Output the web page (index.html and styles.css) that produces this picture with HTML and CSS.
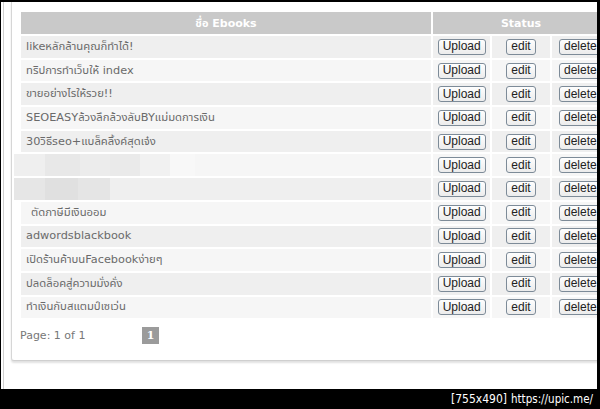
FILE: index.html
```html
<!DOCTYPE html>
<html>
<head>
<meta charset="utf-8">
<link rel="stylesheet" href="styles.css">
</head>
<body>
<div class="screen">
  <div class="page">
    <div class="rule">
      <div class="card">
        <table class="grid">
          <thead>
            <tr><th class="name-h">ชื่อ Ebooks</th><th colspan="3">Status</th></tr>
          </thead>
          <tbody>
            <tr class="odd"><td class="name">likeหลักล้านคุณก็ทำได้!</td><td><button>Upload</button></td><td><button>edit</button></td><td><button>delete</button></td></tr>
            <tr class="even"><td class="name">ทริปการทำเว็บให้ index</td><td><button>Upload</button></td><td><button>edit</button></td><td><button>delete</button></td></tr>
            <tr class="odd"><td class="name">ขายอย่างไรให้รวย!!</td><td><button>Upload</button></td><td><button>edit</button></td><td><button>delete</button></td></tr>
            <tr class="even"><td class="name">SEOEASYล้วงลึกล้วงลับBYแม่มดการเงิน</td><td><button>Upload</button></td><td><button>edit</button></td><td><button>delete</button></td></tr>
            <tr class="odd"><td class="name">30วิธีseo+แบล็คลิ้งค์สุดเจ๋ง</td><td><button>Upload</button></td><td><button>edit</button></td><td><button>delete</button></td></tr>
            <tr class="even"><td class="name blur"><span class="mosaic m1"><i class="b1"></i><i class="b2"></i><i class="b3"></i><i class="b4"></i><i class="b5"></i><i class="b6"></i></span></td><td><button>Upload</button></td><td><button>edit</button></td><td><button>delete</button></td></tr>
            <tr class="odd"><td class="name blur"><span class="mosaic m2"><i class="c1"></i><i class="c2"></i><i class="c3"></i></span></td><td><button>Upload</button></td><td><button>edit</button></td><td><button>delete</button></td></tr>
            <tr class="even"><td class="name indent">ตัดภาษีมีเงินออม</td><td><button>Upload</button></td><td><button>edit</button></td><td><button>delete</button></td></tr>
            <tr class="odd"><td class="name">adwordsblackbook</td><td><button>Upload</button></td><td><button>edit</button></td><td><button>delete</button></td></tr>
            <tr class="even"><td class="name">เปิดร้านค้าบนFacebookง่ายๆ</td><td><button>Upload</button></td><td><button>edit</button></td><td><button>delete</button></td></tr>
            <tr class="odd"><td class="name">ปลดล็อคสู่ความมั่งคั่ง</td><td><button>Upload</button></td><td><button>edit</button></td><td><button>delete</button></td></tr>
            <tr class="even"><td class="name">ทำเงินกับสแตมป์เซเว่น</td><td><button>Upload</button></td><td><button>edit</button></td><td><button>delete</button></td></tr>
          </tbody>
        </table>
        <div class="pager">
          <span class="info">Page: 1 of 1</span>
          <span class="num">1</span>
        </div>
      </div>
    </div>
  </div>
  <div class="bar"><span class="dim">[755x490]</span><span class="url">https://upic.me/</span></div>
</div>
</body>
</html>
```
FILE: styles.css
```css
html, body {
  margin: 0;
  padding: 0;
  background: #000;
}
.screen {
  width: 600px;
  height: 409px;
  padding: 2px 3px 0 1px;
  box-sizing: border-box;
  display: flex;
  flex-direction: column;
  overflow: hidden;
}
.page {
  height: 387px;
  background: #fff;
  padding-left: 2px;
  overflow: hidden;
  flex: none;
}
.rule {
  height: 100%;
  border-left: 1px solid #d0d0d0;
  padding-left: 7px;
}
.card {
  width: 640px;
  border-left: 1px solid #d6d6d6;
  border-bottom: 1px solid #cfcfcf;
  box-shadow: 0 2px 2px rgba(0,0,0,0.12);
  border-radius: 0 0 0 3px;
  padding: 8px 0 16px 7px;
  background: #fff;
}
.grid {
  border-collapse: separate;
  border-spacing: 2px;
  font-family: Tahoma, "DejaVu Sans", "Noto Sans Thai", "Noto Sans", sans-serif;
  font-size: 11px;
  table-layout: fixed;
  width: 592px;
}
.grid th {
  height: 22px;
  padding: 0;
  background: #c9c9c9;
  color: #fff;
  font-weight: bold;
  font-size: 11px;
  text-align: center;
}
.grid th.name-h { width: 410px; }
.grid td {
  height: 21.7px;
  padding: 0;
  text-align: center;
  vertical-align: middle;
  width: 58px;
  line-height: 14px;
}
.grid td.name {
  text-align: left;
  padding-left: 5px;
  color: #6a6a6a;
  white-space: nowrap;
  overflow: visible;
  font-size: 11.3px;
}
.grid td.indent { padding-left: 10px; }
.odd td { background: #efefef; }
.even td { background: #f6f6f6; }
.grid td.blur { position: relative; }
.mosaic {
  position: absolute;
  top: 0;
  left: -7px;
  display: flex;
  height: 100%;
}
.mosaic i { display: block; height: 100%; }
.m1 .b1 { width: 31px; background: #efefef; }
.m1 .b2 { width: 35px; background: #e8e8e8; }
.m1 .b3 { width: 30px; background: #ececec; }
.m1 .b4 { width: 30px; background: #eaeaea; }
.m1 .b5 { width: 30px; background: #f1f1f1; }
.m1 .b6 { width: 25px; background: #f8f8f8; }
.m2 .c1 { width: 31px; background: #e6e6e6; }
.m2 .c2 { width: 33px; background: #e0e0e0; }
.m2 .c3 { width: 32px; background: #e5e5e5; }
button {
  font-family: "Liberation Sans", Arial, sans-serif;
  font-size: 12px;
  color: #222;
  height: 16px;
  padding: 0 4px;
  margin: 0;
  line-height: 13px;
  border: 1px solid #7d8b98;
  border-radius: 3px;
  background: linear-gradient(#fefefe, #ececec);
  vertical-align: middle;
}
.pager {
  display: flex;
  align-items: center;
  padding: 7px 0 0 1px;
  font-family: Verdana, "DejaVu Sans", sans-serif;
  font-size: 11px;
  color: #777;
}
.info { width: 122px; }
.num {
  width: 17px;
  height: 17px;
  line-height: 17px;
  background: #9b9b9b;
  color: #fff;
  text-align: center;
  font-weight: bold;
  font-family: Tahoma, "DejaVu Serif", serif;
}
.bar {
  height: 20px;
  display: flex;
  align-items: center;
  justify-content: flex-end;
  gap: 4px;
  padding-right: 4px;
  color: #fff;
  font-family: "DejaVu Sans Condensed", "DejaVu Sans", sans-serif;
  font-size: 12px;
  white-space: pre;
}
.url { font-family: "DejaVu Sans Condensed", "DejaVu Sans", sans-serif; font-size: 11.5px; }
```
